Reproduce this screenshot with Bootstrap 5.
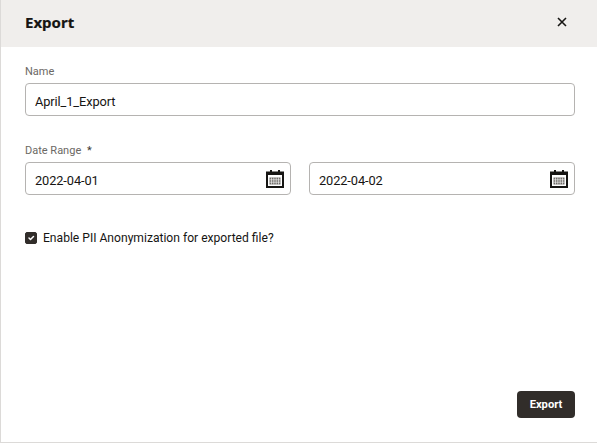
<!DOCTYPE html>
<html lang="en">
<head>
<meta charset="utf-8">
<title>Export</title>
<link rel="stylesheet" href="https://cdn.jsdelivr.net/npm/bootstrap@5.3.0/dist/css/bootstrap.min.css">
<style>
html, body { height: 100%; }
body { font-family: "Roboto", "Noto Sans", sans-serif; color: #161513; background: #fff; overflow: hidden; }
.dlg { height: 443px; border-left: 1px solid #dcdad8; border-bottom: 1px solid #dcdad8; }
.dlg-head { height: 47px; background: #f0eeec; padding: 0 30px 3px 24px; }
.dlg-title { font-family: "Noto Sans", sans-serif; font-size: 15px; font-weight: 700; line-height: 20px; margin: 0; color: #161513; -webkit-text-stroke: .2px #161513; }
.dlg-close { background: none; border: 0; padding: 0; width: 10px; height: 10px; line-height: 0; }
.dlg-body { padding: 16px 22px 0 24px; }
.fld-label { font-size: 11px; line-height: 18px; color: #6b6864; margin: 0 0 2px; display: block; }
.fld-star { margin-left: 3px; color: #3b3835; }
.fld-input { height: 33px; border: 1px solid #b5b3b1; border-radius: 4px; font-size: 12.8px; letter-spacing: -.1px; color: #161513; padding: 4px 9px 0; box-shadow: none; }
.date-row { margin-top: 26px; gap: 18px; }
.date-box { flex: 1 1 0; }
.cal-ic { position: absolute; right: 7px; top: 8px; width: 18px; height: 18px; }
.chk-row { margin-top: 35px; gap: 6px; }
.chk-box { width: 12px; height: 12px; margin: 0; background-color: #312d2a; border-color: #312d2a; flex: none; }
.chk-box:checked { background-color: #312d2a; border-color: #312d2a; }
.form-check-input[type=checkbox].chk-box { border-radius: 2px; }
.chk-label { font-size: 12.1px; line-height: 16px; color: #161513; margin: 0; }
.dlg-foot { padding: 0 22px 24px 0; }
.btn-export { background: #312d2a; color: #fff; border: 0; border-radius: 4px; width: 58px; height: 27px; font-size: 11.2px; font-weight: 700; padding: 0; line-height: 27px; }
.btn-export:hover { background: #312d2a; color: #fff; }
</style>
</head>
<body>
<div class="dlg d-flex flex-column">
  <div class="dlg-head d-flex align-items-center justify-content-between">
    <h1 class="dlg-title">Export</h1>
    <button class="dlg-close" type="button" aria-label="Close">
      <svg width="10" height="10" viewBox="0 0 10 10"><path d="M1 1l8 8M9 1l-8 8" stroke="#161513" stroke-width="1.6" fill="none"/></svg>
    </button>
  </div>
  <div class="dlg-body flex-grow-1">
    <label class="fld-label" for="nm">Name</label>
    <input id="nm" class="form-control fld-input" type="text" value="April_1_Export">
    <div class="date-row d-flex">
      <div class="date-box">
        <label class="fld-label" for="d1">Date Range <span class="fld-star">*</span></label>
        <div class="position-relative">
          <input id="d1" class="form-control fld-input" type="text" value="2022-04-01">
          <svg class="cal-ic" viewBox="0 0 18 18"><path d="M1 2.5h16v14.5H1z" fill="#fff" stroke="#161513" stroke-width="2"/><path d="M1 2h16v3H1z" fill="#161513"/><path d="M5 0v4M13 0v4" stroke="#161513" stroke-width="2"/><path d="M3.5 7.5h11v7h-11z" fill="#6f6c69"/><path d="M5.5 7.5v7M7.8 7.5v7M10.2 7.5v7M12.5 7.5v7M3.5 9.8h11M3.5 12.2h11" stroke="#fff" stroke-width=".6"/></svg>
        </div>
      </div>
      <div class="date-box d-flex flex-column justify-content-end">
        <div class="position-relative">
          <input class="form-control fld-input" type="text" value="2022-04-02" aria-label="End date">
          <svg class="cal-ic" viewBox="0 0 18 18"><path d="M1 2.5h16v14.5H1z" fill="#fff" stroke="#161513" stroke-width="2"/><path d="M1 2h16v3H1z" fill="#161513"/><path d="M5 0v4M13 0v4" stroke="#161513" stroke-width="2"/><path d="M3.5 7.5h11v7h-11z" fill="#6f6c69"/><path d="M5.5 7.5v7M7.8 7.5v7M10.2 7.5v7M12.5 7.5v7M3.5 9.8h11M3.5 12.2h11" stroke="#fff" stroke-width=".6"/></svg>
        </div>
      </div>
    </div>
    <div class="chk-row d-flex align-items-center">
      <input id="pii" class="form-check-input chk-box" type="checkbox" checked>
      <label class="chk-label" for="pii">Enable PII Anonymization for exported file?</label>
    </div>
  </div>
  <div class="dlg-foot d-flex justify-content-end">
    <button class="btn btn-export" type="button">Export</button>
  </div>
</div>
<script src="https://cdn.jsdelivr.net/npm/bootstrap@5.3.0/dist/js/bootstrap.bundle.min.js"></script>
</body>
</html>
